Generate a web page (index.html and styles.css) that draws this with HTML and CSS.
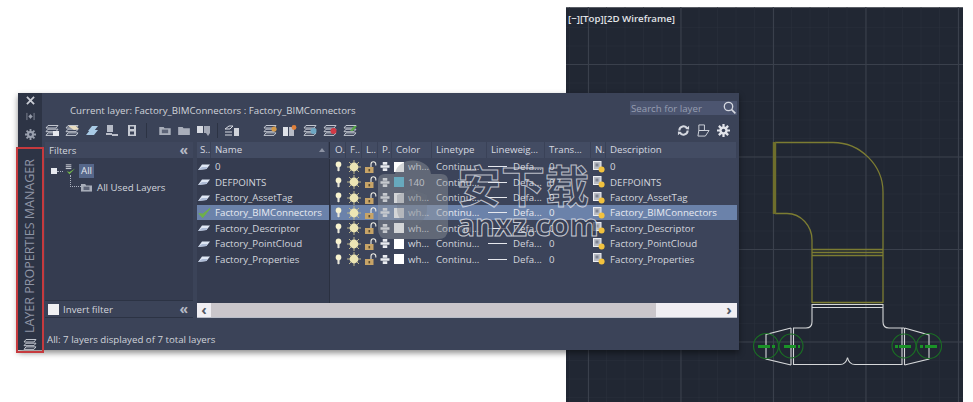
FILE: index.html
```html
<!DOCTYPE html>
<html lang="en">
<head>
    <meta charset="UTF-8">
    <title>Layer Properties Manager</title>
    <link rel="stylesheet" href="styles.css">
</head>
<body>
    <!-- shared icons -->
    <svg class="defs" width="0" height="0">
        <symbol id="i-layer" viewBox="0 0 12 6"><path d="M0 6 L4 .5 H12 L8.5 5 Z" fill="#dfe7f4"/><path d="M0 6 L4 3 H9.5 L8.5 5 Z" fill="#aebcd6"/></symbol>
        <symbol id="i-check" viewBox="0 0 14 12"><path d="M1 6.5 L5 11 L13 1 L5.2 7.2 Z" fill="#6fb04a" stroke="#6fb04a"/></symbol>
        <symbol id="i-bulb" viewBox="0 0 8 12"><circle cx="4" cy="3.6" r="3.2" fill="#f8f3cf"/><path d="M2.8 6h2.4v4.4l-1.2 1.2-1.2-1.2z" fill="#e8e6da"/></symbol>
        <symbol id="i-sun" viewBox="0 0 14 14"><path d="M7 0v14M0 7h14M2 2l10 10M12 2 2 12" stroke="#bdb68a" stroke-width="1"/><circle cx="7" cy="7" r="4.4" fill="#ece5b4"/></symbol>
        <symbol id="i-lock" viewBox="0 0 12 12"><path d="M6.5 6V3.2a2.4 2.4 0 0 1 4.8 0v1.3" fill="none" stroke="#f0eee6" stroke-width="1.1"/><rect x=".5" y="6" width="8.5" height="6" fill="#c7a468"/><rect x="4" y="8" width="1.6" height="2.4" fill="#5b4a2c"/></symbol>
        <symbol id="i-plot" viewBox="0 0 10 10"><path d="M2.5 0h5v3h-5zM0 3.6h10v2.8H0zM2.5 7h5v3h-5z" fill="#e9ebf0"/></symbol>
        <symbol id="i-note" viewBox="0 0 12 12"><rect x=".5" y=".5" width="7.5" height="8" fill="#b9bcc4" stroke="#eceef2"/><rect x="2.5" y="2.5" width="3" height="3" fill="#7e8391"/><circle cx="8.6" cy="8.6" r="3" fill="#f2c23e"/></symbol>
        <symbol id="i-stack" viewBox="0 0 14 11"><path d="M3 .5h10L11 3H1zM3 4.2h10L11 6.7H1zM3 7.9h10L11 10.4H1z" fill="none" stroke="#c3c7d0"/></symbol>
        <symbol id="i-folder" viewBox="0 0 13 10"><path d="M0 1h5l1 1.5h7V10H0z" fill="#a9aeba"/><rect x="3" y="4" width="7" height="4" fill="#5d6477"/></symbol>
        <symbol id="i-gear" viewBox="0 0 14 14"><path d="M7 0v14M0 7h14M2 2l10 10M12 2 2 12" stroke="currentColor" stroke-width="2.4"/><circle cx="7" cy="7" r="4.4" fill="currentColor"/><circle cx="7" cy="7" r="1.9" fill="#3b4358"/></symbol>
    </svg>

    <main class="stage">
        <section class="viewport">
            <div class="viewport-label">[&minus;][Top][2D Wireframe]</div>
            <!-- drawing coordinates run from the viewport's top left corner -->
            <svg class="drawing" width="397" height="395" viewBox="566 7 397 395">
                <defs>
                    <pattern id="minor" x="570" y="9.5" width="18.5" height="18.5" patternUnits="userSpaceOnUse">
                        <path d="M18.5 0V18.5M0 18.5H18.5" stroke="#2a303c" stroke-width="1" fill="none"/>
                    </pattern>
                    <pattern id="major" x="588" y="64" width="92.5" height="92.5" patternUnits="userSpaceOnUse">
                        <path d="M.5 0V92.5M0 .5H92.5" stroke="#3a404c" stroke-width="1" fill="none"/>
                    </pattern>
                </defs>
                <rect x="566" y="7" width="397" height="395" fill="url(#minor)"/>
                <rect x="566" y="7" width="397" height="395" fill="url(#major)"/>
                <g class="yellow">
                    <path d="M775 142.5H833C860 142.5 883 165 883 192V303"/>
                    <path d="M775 213.5H787C801 213.5 812 226 812 240V303"/>
                    <path d="M812 249.5H883M812 252.5H883M812 255.5H883M812 302.5H883"/>
                    <path class="thick" d="M774.5 142V214"/>
                </g>
                <g class="white">
                    <path d="M812 304.5H883M812 307.5H883"/>
                    <path d="M812 304V322Q812 328 806 328H793"/>
                    <path d="M883 304V322Q883 328 889 328H904"/>
                    <path d="M791 328V365M793.5 328V365M902 328V365M904.5 328V365"/>
                    <path d="M791 328L766 334.5V359L791 365"/>
                    <path d="M904.5 328L929 335V359L904.5 365"/>
                    <path d="M793 364.5H840Q846 364.5 847.5 357.5Q849 364.5 855 364.5H902"/>
                </g>
                <g class="green">
                    <circle cx="766" cy="346" r="12.5"/>
                    <circle cx="791" cy="346" r="12"/>
                    <circle cx="904" cy="346" r="12"/>
                    <circle cx="929" cy="346" r="12.5"/>
                    <path class="dash" d="M758 346.5H770M772 346.5H775M784 346.5H796M798 346.5H800M895 346.5H898M899 346.5H911M920 346.5H923M925 346.5H937"/>
                </g>
            </svg>
        </section>

        <section class="panel">
            <aside class="sidebar">
                <svg class="side-icon" viewBox="0 0 10 10"><path d="M1 1l8 8M9 1 1 9" stroke="#c9ccd4" stroke-width="2"/></svg>
                <svg class="side-icon" viewBox="0 0 10 10"><path d="M1 1v8M9 1v8M3 5l2-2v4zM7 5 5 3v4z" fill="#9aa0ae" stroke="#9aa0ae" stroke-width=".8"/></svg>
                <svg class="side-icon side-gear" viewBox="0 0 14 14"><use href="#i-gear"/></svg>
                <div class="side-title">LAYER PROPERTIES MANAGER</div>
                <svg class="side-stack" viewBox="0 0 14 11"><use href="#i-stack"/></svg>
            </aside>

            <div class="content">
                <div class="title-row">
                    <div class="current">Current layer: Factory_BIMConnectors : Factory_BIMConnectors</div>
                    <div class="search">
                        <span>Search for layer</span>
                        <svg width="13" height="13" viewBox="0 0 13 13"><circle cx="5.5" cy="5.5" r="4.2" fill="none" stroke="#d5d8e0" stroke-width="1.3"/><path d="M8.6 8.6 12.4 12.4" stroke="#d5d8e0" stroke-width="1.6"/></svg>
                    </div>
                </div>

                <div class="toolbar">
                    <svg class="tool" viewBox="0 0 14 11"><use href="#i-stack"/><rect x="8" y="6" width="6" height="5" fill="#e6e8ee"/></svg>
                    <svg class="tool" viewBox="0 0 14 11"><use href="#i-stack"/><path d="M3 1h8l3 3-5 1z" fill="#e8dcc0"/></svg>
                    <svg class="tool" viewBox="0 0 14 11"><path d="M1 10 5 5h8l-4 5zM3 6l4-5h6L9 6z" fill="#a9cbe6"/></svg>
                    <svg class="tool" viewBox="0 0 14 11"><rect x="2" y="0" width="6" height="7" fill="#b6bbc7"/><path d="M1 9h6M7 10h6" stroke="#e6e8ee" stroke-width="1.4"/></svg>
                    <svg class="tool" viewBox="0 0 14 11"><rect x="3" y="0" width="8" height="11" fill="#c6cad3"/><rect x="5" y="1.5" width="4" height="2.5" fill="#3b4358"/><rect x="5" y="6.5" width="4" height="3" fill="#3b4358"/></svg>
                    <i class="tool-sep"></i>
                    <svg class="tool tool-folder" viewBox="0 0 13 10"><use href="#i-folder"/></svg>
                    <svg class="tool tool-folder" viewBox="0 0 13 10"><path d="M0 1h5l1 1.5h7V10H0z" fill="#a9aeba"/></svg>
                    <svg class="tool" viewBox="0 0 14 11"><rect x="0" y="1" width="6" height="7" fill="#d9dce3"/><rect x="7" y="1" width="6" height="7" fill="#a4a9b6"/><path d="M9 8h4l-2 3z" fill="#a4a9b6"/></svg>
                    <i class="tool-sep sep-short"></i>
                    <svg class="tool" viewBox="0 0 14 11"><path d="M0 4 4 1h4L5 4zM0 7h7M0 10h7" stroke="#d8dbe2" fill="none"/><rect x="9" y="3" width="5" height="8" fill="#d0d3da"/></svg>
                    <div class="tool-group">
                        <svg class="tool" viewBox="0 0 14 11"><use href="#i-stack"/><circle cx="11" cy="4" r="2.6" fill="#d39a4a"/></svg>
                        <svg class="tool" viewBox="0 0 14 11"><rect x="0" y="2" width="5" height="9" fill="#dfe2e8"/><rect x="6" y="2" width="5" height="9" fill="#b8bcc6"/><circle cx="11" cy="2.5" r="2.4" fill="#e0803a"/></svg>
                        <svg class="tool" viewBox="0 0 14 11"><use href="#i-stack"/><circle cx="10.5" cy="6" r="3" fill="#6fa8c4"/></svg>
                        <svg class="tool" viewBox="0 0 14 11"><use href="#i-stack"/><circle cx="10.5" cy="6" r="3" fill="#d23a46"/></svg>
                        <svg class="tool" viewBox="0 0 14 11"><use href="#i-stack"/><path d="M7 6 11 1h3l-4 5z" fill="#59a84a"/></svg>
                    </div>
                    <div class="tool-right">
                        <svg class="tool" viewBox="0 0 14 14"><path d="M2.5 7A4.5 4.5 0 0 1 11 5M11.5 7A4.5 4.5 0 0 1 3 9" fill="none" stroke="#d5d8e0" stroke-width="2.2"/><path d="M9 5.5 13 6V2zM5 8.5 1 8v4z" fill="#d5d8e0"/></svg>
                        <svg class="tool" viewBox="0 0 14 14"><path d="M2 1h6v6H2zM2 7 1 13h8l4-6H2z" fill="none" stroke="#d5d8e0"/></svg>
                        <svg class="tool tool-gear" viewBox="0 0 14 14"><use href="#i-gear"/></svg>
                    </div>
                </div>

                <div class="panes">
                    <div class="filters">
                        <div class="filters-head"><span>Filters</span><span class="chevrons">&laquo;</span></div>
                        <div class="tree">
                            <div class="tree-row">
                                <i class="tree-box"></i><i class="tree-dash"></i>
                                <svg class="tree-icon" viewBox="0 0 14 12"><path d="M3 1h6M3 3h6M3 5h6" stroke="#d8dbe2"/><path d="M4 8l3 3 6-6-6 3.6z" fill="#6fb04a"/></svg>
                                <span class="tree-all">All</span>
                            </div>
                            <div class="tree-row tree-child">
                                <i class="tree-elbow"></i>
                                <svg class="tree-folder" viewBox="0 0 13 10"><use href="#i-folder"/></svg>
                                <span>All Used Layers</span>
                            </div>
                        </div>
                        <div class="invert"><i class="checkbox"></i><span>Invert filter</span><span class="chevrons">&laquo;</span></div>
                    </div>

                    <div class="list">
                        <div class="row head">
                            <span>S..</span><span class="name">Name<i class="sort"></i></span><b></b>
                            <span>O.</span><span>F..</span><span>L..</span><span>P.</span>
                            <span>Color</span><span>Linetype</span><span>Lineweig...</span><span>Trans...</span><span>N.</span><span>Description</span>
                        </div>
                        <div class="rows">
                            <div class="row">
                                <span class="status"><svg><use href="#i-layer"/></svg></span><span class="name">0</span><b></b>
                                <span class="ico"><svg class="bulb"><use href="#i-bulb"/></svg></span><span class="ico"><svg class="sun"><use href="#i-sun"/></svg></span><span class="ico"><svg class="lock"><use href="#i-lock"/></svg></span><span class="ico"><svg class="plot"><use href="#i-plot"/></svg></span>
                                <span class="color"><i class="swatch"></i>wh...</span><span>Continu...</span><span class="weight"><i></i>Defa...</span><span>0</span><span class="ico"><svg class="note"><use href="#i-note"/></svg></span><span class="desc">0</span>
                            </div>
                            <div class="row">
                                <span class="status"><svg><use href="#i-layer"/></svg></span><span class="name">DEFPOINTS</span><b></b>
                                <span class="ico"><svg class="bulb"><use href="#i-bulb"/></svg></span><span class="ico"><svg class="sun"><use href="#i-sun"/></svg></span><span class="ico"><svg class="lock"><use href="#i-lock"/></svg></span><span class="ico"><svg class="plot"><use href="#i-plot"/></svg></span>
                                <span class="color"><i class="swatch swatch-140"></i>140</span><span>Continu...</span><span class="weight"><i></i>Defa...</span><span>0</span><span class="ico"><svg class="note"><use href="#i-note"/></svg></span><span class="desc">DEFPOINTS</span>
                            </div>
                            <div class="row">
                                <span class="status"><svg><use href="#i-layer"/></svg></span><span class="name">Factory_AssetTag</span><b></b>
                                <span class="ico"><svg class="bulb"><use href="#i-bulb"/></svg></span><span class="ico"><svg class="sun"><use href="#i-sun"/></svg></span><span class="ico"><svg class="lock"><use href="#i-lock"/></svg></span><span class="ico"><svg class="plot"><use href="#i-plot"/></svg></span>
                                <span class="color"><i class="swatch"></i>wh...</span><span>Continu...</span><span class="weight"><i></i>Defa...</span><span>0</span><span class="ico"><svg class="note"><use href="#i-note"/></svg></span><span class="desc">Factory_AssetTag</span>
                            </div>
                            <div class="row selected">
                                <span class="status"><svg class="check"><use href="#i-check"/></svg></span><span class="name">Factory_BIMConnectors</span><b></b>
                                <span class="ico"><svg class="bulb"><use href="#i-bulb"/></svg></span><span class="ico"><svg class="sun"><use href="#i-sun"/></svg></span><span class="ico"><svg class="lock"><use href="#i-lock"/></svg></span><span class="ico"><svg class="plot"><use href="#i-plot"/></svg></span>
                                <span class="color"><i class="swatch"></i>wh...</span><span>Continu...</span><span class="weight"><i></i>Defa...</span><span>0</span><span class="ico"><svg class="note"><use href="#i-note"/></svg></span><span class="desc">Factory_BIMConnectors</span>
                            </div>
                            <div class="row">
                                <span class="status"><svg><use href="#i-layer"/></svg></span><span class="name">Factory_Descriptor</span><b></b>
                                <span class="ico"><svg class="bulb"><use href="#i-bulb"/></svg></span><span class="ico"><svg class="sun"><use href="#i-sun"/></svg></span><span class="ico"><svg class="lock"><use href="#i-lock"/></svg></span><span class="ico"><svg class="plot"><use href="#i-plot"/></svg></span>
                                <span class="color"><i class="swatch"></i>wh...</span><span>Continu...</span><span class="weight"><i></i>Defa...</span><span>0</span><span class="ico"><svg class="note"><use href="#i-note"/></svg></span><span class="desc">Factory_Descriptor</span>
                            </div>
                            <div class="row">
                                <span class="status"><svg><use href="#i-layer"/></svg></span><span class="name">Factory_PointCloud</span><b></b>
                                <span class="ico"><svg class="bulb"><use href="#i-bulb"/></svg></span><span class="ico"><svg class="sun"><use href="#i-sun"/></svg></span><span class="ico"><svg class="lock"><use href="#i-lock"/></svg></span><span class="ico"><svg class="plot"><use href="#i-plot"/></svg></span>
                                <span class="color"><i class="swatch"></i>wh...</span><span>Continu...</span><span class="weight"><i></i>Defa...</span><span>0</span><span class="ico"><svg class="note"><use href="#i-note"/></svg></span><span class="desc">Factory_PointCloud</span>
                            </div>
                            <div class="row">
                                <span class="status"><svg><use href="#i-layer"/></svg></span><span class="name">Factory_Properties</span><b></b>
                                <span class="ico"><svg class="bulb"><use href="#i-bulb"/></svg></span><span class="ico"><svg class="sun"><use href="#i-sun"/></svg></span><span class="ico"><svg class="lock"><use href="#i-lock"/></svg></span><span class="ico"><svg class="plot"><use href="#i-plot"/></svg></span>
                                <span class="color"><i class="swatch"></i>wh...</span><span>Continu...</span><span class="weight"><i></i>Defa...</span><span>0</span><span class="ico"><svg class="note"><use href="#i-note"/></svg></span><span class="desc">Factory_Properties</span>
                            </div>
                        </div>
                        <div class="scrollbar">
                            <div class="scroll-btn">&lsaquo;</div>
                            <div class="scroll-thumb"></div>
                            <div class="scroll-btn scroll-end">&rsaquo;</div>
                        </div>
                    </div>
                </div>

                <div class="statusbar">All: 7 layers displayed of 7 total layers</div>
            </div>

            <div class="highlight"></div>
        </section>

        <!-- site stamp laid over the dialog -->
        <div class="stamp">
            <svg class="stamp-bag" width="72" height="82" viewBox="0 0 72 82">
                <path d="M18 15C20 -3 52 -3 54 15H64Q71 15 71 22V70Q71 80 61 80H11Q1 80 1 70V22Q1 15 8 15Z" fill="rgba(150,155,160,.42)"/>
                <path d="M35 30 50 36V50Q50 62 35 69Q20 62 20 50V36Z" fill="rgba(110,115,125,.3)"/>
            </svg>
            <div class="stamp-text">
                <div class="stamp-cn">安下载</div>
                <div class="stamp-en">anxz.com</div>
            </div>
        </div>
    </main>
</body>
</html>
```

FILE: styles.css
```css
* {
    box-sizing: border-box;
}
body {
    margin: 0;
    background: #fff;
    font-family: "Open Sans", "Noto Sans", sans-serif;
    font-size: 9.7px;
    color: #d3d6dd;
    overflow: hidden;
}
.defs {
    position: absolute;
}
.stage {
    position: relative;
    width: 973px;
    height: 402px;
    overflow: hidden;
    padding: 7px 0 0 566px;
}

/* model space */
.viewport {
    position: relative;
    width: 397px;
    height: 395px;
    background: #212733;
    border-top: 1px solid #5a5e66;
}
.viewport-label {
    position: absolute;
    left: 2px;
    top: 4px;
    font-weight: 600;
    color: #e2e4e8;
}
.drawing {
    display: block;
    margin-top: -1px;
}
.drawing path,
.drawing circle {
    fill: none;
}
.yellow {
    stroke: #7c7c32;
    stroke-width: 1.3;
}
.yellow .thick {
    stroke-width: 3.4;
    stroke: #6e6e2c;
}
.white {
    stroke: #d6d8da;
    stroke-width: 1.1;
}
.green {
    stroke: #1a6f24;
    stroke-width: 1.1;
}
.green .dash {
    stroke: #1a9227;
    stroke-width: 3;
}

/* layer dialog */
.panel {
    position: absolute;
    left: 18px;
    top: 93px;
    width: 721px;
    height: 257px;
    display: flex;
    background: #3b4358;
    box-shadow: 0 3px 6px rgba(0, 0, 0, 0.45);
}
.sidebar {
    width: 24px;
    background: #2d3445;
    display: flex;
    flex-direction: column;
    align-items: center;
    padding-top: 3px;
    padding-right: 0;
}
.side-icon {
    width: 9px;
    height: 9px;
    margin-bottom: 7px;
}
.side-gear {
    width: 11px;
    height: 11px;
    margin-top: 1px;
    color: #9aa0ae;
}
.side-title {
    writing-mode: vertical-rl;
    transform: rotate(180deg);
    font-size: 12.5px;
    line-height: 16px;
    color: #8f95a5;
    margin-top: 12px;
    white-space: nowrap;
}
.side-stack {
    width: 14px;
    height: 11px;
    margin-top: 6px;
}
.highlight {
    position: absolute;
    left: -2px;
    top: 54px;
    width: 28px;
    height: 206px;
    border: 2px solid #c63a3e;
}
.content {
    flex: 1;
    padding-left: 3px;
    padding-right: 2px;
    display: flex;
    flex-direction: column;
    min-width: 0;
}
.title-row {
    height: 28px;
    display: flex;
    justify-content: space-between;
    padding-top: 8px;
}
.current {
    margin-left: 25px;
    padding-top: 3px;
    color: #d0d3da;
}
.search {
    width: 107px;
    height: 14px;
    background: #4c5570;
    display: flex;
    justify-content: space-between;
    align-items: center;
    padding: 0 1px;
    color: #979eb0;
}
.search svg {
    margin-bottom: 1px;
}
.toolbar {
    height: 18px;
    display: flex;
    align-items: center;
    margin-bottom: 3px;
}
.tool {
    width: 14px;
    height: 11px;
    margin-right: 6px;
    flex: none;
}
.tool-folder {
    width: 12px;
    height: 9px;
    margin-right: 7px;
}
.tool-sep {
    width: 1px;
    height: 15px;
    background: #2c3344;
    margin: 0 12px 0 1px;
}
.sep-short {
    margin: 0 7px 0 0;
}
.tool-group {
    display: flex;
    margin-left: 18px;
}
.tool-right {
    margin-left: auto;
    display: flex;
    gap: 3px;
    margin-right: 3px;
}
.tool-right .tool {
    width: 13px;
    height: 13px;
    margin-right: 4px;
}
.tool-gear {
    color: #e2e4ea;
}
.panes {
    height: 176px;
    display: flex;
    gap: 4px;
    margin-right: 0;
}
.filters {
    width: 148px;
    background: #353c50;
    display: flex;
    flex-direction: column;
}
.filters-head {
    height: 16px;
    background: #3f475d;
    display: flex;
    justify-content: space-between;
    align-items: center;
    padding: 0 4px;
}
.chevrons {
    font-size: 14px;
    line-height: 12px;
    font-weight: 700;
    color: #b6bac5;
    margin-right: 1px;
}
.tree {
    flex: 1;
    padding: 6px 0 0 6px;
}
.tree-row {
    display: flex;
    align-items: center;
    height: 14px;
    margin-bottom: 2px;
}
.tree-box {
    width: 6px;
    height: 6px;
    background: #e6e8ee;
}
.tree-dash {
    width: 6px;
    border-top: 1px dotted #aab0be;
}
.tree-icon {
    width: 13px;
    height: 13px;
    margin-right: 3px;
    margin-bottom: 3px;
}
.tree-all {
    background: #56678a;
    padding: 0 2px;
    line-height: 14px;
    color: #e4e6ec;
}
.tree-child {
    padding-left: 19px;
}
.tree-elbow {
    width: 11px;
    height: 12px;
    border-left: 1px dotted #aab0be;
    border-bottom: 1px dotted #aab0be;
    margin-top: -12px;
}
.tree-folder {
    width: 11px;
    height: 9px;
    margin-right: 5px;
}
.invert {
    height: 18px;
    background: #3b4358;
    border-top: 1px solid #2c3344;
    border-bottom: 1px solid #2c3344;
    display: flex;
    align-items: center;
    padding-left: 3px;
    padding-right: 4px;
}
.checkbox {
    width: 11px;
    height: 11px;
    background: #f0f0f2;
    margin-right: 4px;
}
.invert .chevrons {
    margin-left: auto;
}

/* layer table */
.list {
    width: 540px;
    display: flex;
    flex-direction: column;
    background: linear-gradient(to right, #353c50 132px, #3c445a 132px);
}
.row {
    display: grid;
    grid-template-columns: 14px 118px 2px 15px 16px 16px 14px 40px 55px 58px 46px 15px 131px;
    height: 15.43px;
    align-items: center;
    white-space: nowrap;
}
.row > span {
    padding-left: 4px;
    overflow: hidden;
    line-height: 15px;
}
.row > b {
    height: 100%;
    width: 1px;
    background: #2a3040;
}
.head {
    height: 16px;
    margin-bottom: 1px;
    background: #434c63;
}
.head > span {
    height: 16px;
    border-right: 1px solid #3a4258;
    color: #d6d9e0;
}
.head > span:first-child {
    padding-left: 3px;
}
.name {
    position: relative;
}
.sort {
    position: absolute;
    right: 3px;
    top: 6px;
    border: 3.5px solid transparent;
    border-top: 0;
    border-bottom: 4px solid #8d93a3;
}
.rows {
    flex: 1;
    position: relative;
    background: linear-gradient(#2a3040, #2a3040) 132px 0 / 1px 100% no-repeat;
}
.rows .row > span {
    display: flex;
    align-items: center;
    height: 15px;
}
.rows .status {
    padding-left: 1px;
}
.status svg {
    width: 12px;
    height: 6px;
}
.status .check {
    height: 12px;
    width: 13px;
}
.selected > span {
    background: #6b82aa;
    color: #e6e9f0;
}
.ico {
    justify-content: center;
    padding-left: 0 !important;
}
.bulb {
    width: 7px;
    height: 11px;
}
.sun {
    width: 14px;
    height: 14px;
}
.lock {
    width: 13px;
    height: 12px;
}
.plot {
    width: 10px;
    height: 9px;
}
.note {
    width: 12px;
    height: 12px;
}
.color {
    padding-left: 2px !important;
}
.swatch {
    flex: none;
    width: 10px;
    height: 10px;
    background: #fff;
    margin-right: 4px;
}
.swatch-140 {
    background: #45b3d2;
}
.weight {
    padding-left: 1px !important;
}
.weight i {
    flex: none;
    width: 19px;
    border-top: 1px solid #e6e8ee;
    margin-right: 6px;
}
.scrollbar {
    height: 15px;
    display: flex;
    background: #f0eef3;
    border-bottom: 1px solid #b9bdc8;
}
.scroll-btn {
    width: 14px;
    text-align: center;
    font-size: 15px;
    font-weight: 700;
    line-height: 12px;
    color: #555a66;
}
.scroll-thumb {
    width: 445px;
    background: #cac6cb;
}
.scroll-end {
    margin-left: auto;
    margin-right: 1px;
}
.statusbar {
    padding-top: 15px;
    padding-left: 2px;
    color: #d0d3da;
}

/* stamp */
.stamp {
    position: absolute;
    left: 377px;
    top: 159px;
    display: flex;
    gap: 8px;
    pointer-events: none;
}
.stamp-cn {
    font-family: "Noto Sans CJK SC", sans-serif;
    font-size: 44px;
    font-weight: 700;
    line-height: 50px;
    color: transparent;
    -webkit-text-stroke: 1px rgba(230, 232, 238, 0.75);
}
.stamp-en {
    font-family: "Open Sans", sans-serif;
    font-size: 30px;
    font-weight: 700;
    line-height: 26px;
    margin-top: 3px;
    color: rgba(55, 62, 82, 0.75);
    -webkit-text-stroke: 1px rgba(235, 237, 242, 0.8);
}
```
